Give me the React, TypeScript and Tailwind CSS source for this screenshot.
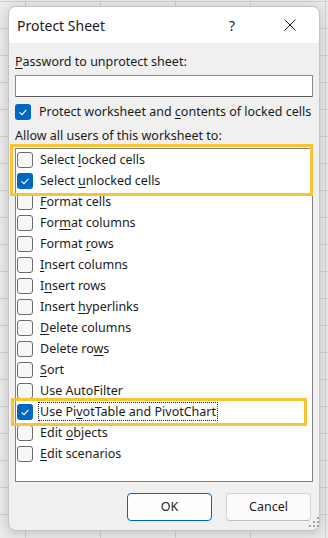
import React from 'react';

// "&" marks the access key, as in a Windows resource string
interface Option {
  label: string;
  checked?: boolean;
  focused?: boolean;
}

const OPTIONS: Option[] = [
  { label: 'Select &locked cells' },
  { label: 'Select &unlocked cells', checked: true },
  { label: '&Format cells' },
  { label: 'For&mat columns' },
  { label: 'Format &rows' },
  { label: '&Insert columns' },
  { label: 'I&nsert rows' },
  { label: 'Insert &hyperlinks' },
  { label: '&Delete columns' },
  { label: 'Delete ro&ws' },
  { label: '&Sort' },
  { label: 'Use AutoFilter' },
  { label: 'Use Pi&votTable and PivotChart', checked: true, focused: true },
  { label: 'Edit &objects' },
  { label: '&Edit scenarios' },
];

const AccessLabel: React.FC<{ text: string }> = ({ text }) => {
  const idx = text.indexOf('&');
  if (idx < 0) return <>{text}</>;
  return (
    <>
      {text.slice(0, idx)}
      <u className="underline-offset-[2px]">{text.charAt(idx + 1)}</u>
      {text.slice(idx + 2)}
    </>
  );
};

const Checkbox: React.FC<{ checked?: boolean }> = ({ checked }) =>
  checked ? (
    <div className="w-[16px] h-[16px] shrink-0 rounded-[3px] bg-[#0067c0] flex items-center justify-center">
      <svg width="16" height="16" viewBox="0 0 16 16">
        <path d="M4.6 8.3 L7 10.6 L11.4 5.8" fill="none" stroke="#ffffff" strokeWidth="1.1" />
      </svg>
    </div>
  ) : (
    <div className="w-[16px] h-[16px] shrink-0 rounded-[3px] border border-[#6b6b6b] bg-[#f7f7f7]" />
  );

export default function App() {
  return (
    <div className="relative w-[328px] h-[538px] overflow-hidden pt-[6px] pl-[8px] bg-[#eaeaea] bg-[linear-gradient(to_right,#cfcfcf_1px,transparent_1px),linear-gradient(to_bottom,#cfcfcf_1px,transparent_1px)] bg-[size:75px_27px] bg-[position:25px_1px] font-['Noto_Sans',sans-serif] text-[#1b1b1b]">
      <div className="w-[312px] h-[525px] flex flex-col rounded-[8px] border border-[#c4c4c4] bg-[#f0f0f0] overflow-hidden shadow-[0_2px_12px_rgba(0,0,0,0.18)]">
        {/* title bar */}
        <div className="h-[36px] shrink-0 flex items-center bg-white pl-[8px]">
          <span className="text-[14px]">Protect Sheet</span>
          <div className="ml-auto flex items-center">
            <span className="w-[46px] text-center text-[14px]">?</span>
            <div className="w-[46px] ml-[12px] mr-[6px] flex justify-center">
              <svg width="12" height="12" viewBox="0 0 12 12">
                <path d="M0.5 0.5 L11.5 11.5 M11.5 0.5 L0.5 11.5" stroke="#1b1b1b" strokeWidth="1" />
              </svg>
            </div>
          </div>
        </div>

        <div className="flex-1 flex flex-col px-[6px] pt-[11px] text-[12.5px]">
          <div className="leading-[16px]">
            <AccessLabel text="&Password to unprotect sheet:" />
          </div>
          <div className="mt-[5px] h-[22px] bg-white border border-[#8a8a8a] border-b-[#5c5c5c] rounded-[1px]" />

          <div className="mt-[5px] h-[20px] flex items-center gap-[8px]">
            <Checkbox checked />
            <span>
              <AccessLabel text="Protect worksheet and &contents of locked cells" />
            </span>
          </div>

          <div className="mt-[6px] leading-[16px]">Allow all users of this worksheet to:</div>

          <div className="mt-[4px] h-[334px] bg-white border border-[#828282] pl-[1px]">
            {OPTIONS.map((opt) => (
              <div key={opt.label} className="h-[21px] flex items-center gap-[5px]">
                <Checkbox checked={opt.checked} />
                <span
                  className={
                    opt.focused
                      ? 'leading-[17px] px-[1px] border border-dotted border-[#222]'
                      : 'leading-[17px] px-[1px] border border-transparent'
                  }
                >
                  <AccessLabel text={opt.label} />
                </span>
              </div>
            ))}
          </div>

          <div className="mt-[11px] flex justify-end gap-[14px] pr-[2px]">
            <button className="w-[85px] h-[28px] rounded-[4px] border border-[#0067c0] bg-[#fdfdfd] text-[12.5px]">
              OK
            </button>
            <button className="w-[85px] h-[28px] rounded-[4px] border border-[#d3d3d3] border-b-[#bdbdbd] bg-[#fbfbfb] text-[12.5px]">
              Cancel
            </button>
          </div>
        </div>
      </div>

      {/* annotation boxes */}
      <div className="absolute left-[10px] top-[144px] w-[303px] h-[52px] border-[3px] border-[#f5c533]" />
      <div className="absolute left-[11px] top-[398px] w-[296px] h-[28px] border-[3px] border-[#f5c533]" />

      {/* size grip */}
      <svg className="absolute left-[307px] top-[515px]" width="13" height="13" viewBox="0 0 13 13">
        <g fill="#a3a3a3">
          <rect x="10" y="2" width="2" height="2" />
          <rect x="6" y="6" width="2" height="2" />
          <rect x="10" y="6" width="2" height="2" />
          <rect x="2" y="10" width="2" height="2" />
          <rect x="6" y="10" width="2" height="2" />
          <rect x="10" y="10" width="2" height="2" />
        </g>
      </svg>
    </div>
  );
}
